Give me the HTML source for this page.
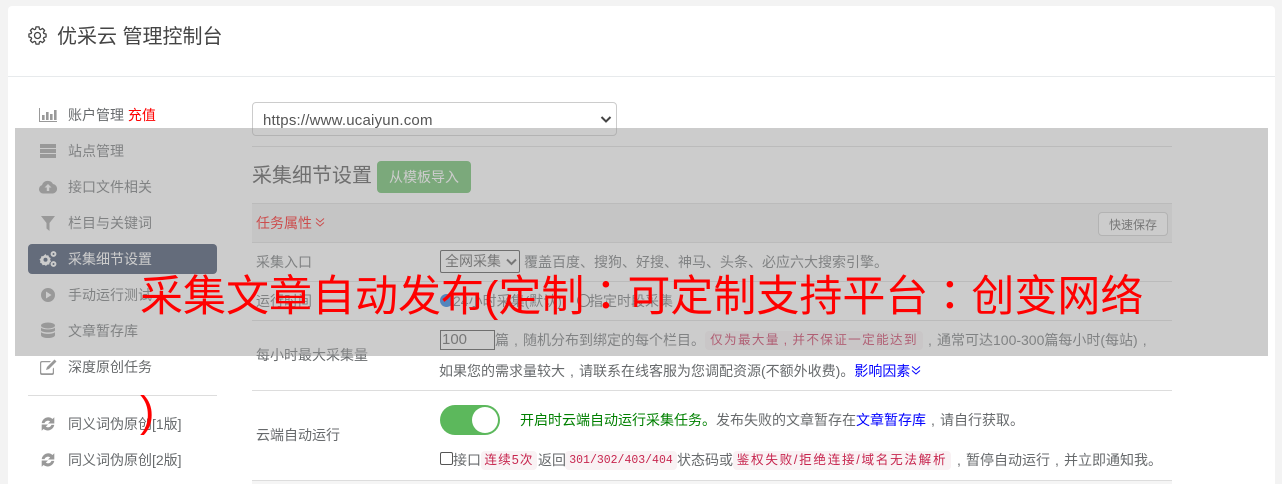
<!DOCTYPE html>
<html lang="zh-CN"><head><meta charset="utf-8"><title>优采云 管理控制台</title>
<style>
html,body{margin:0;padding:0;width:1282px;height:484px;overflow:hidden;background:#f3f3f3}
body{position:relative;font-family:"Liberation Sans","Noto Sans CJK SC",sans-serif;font-size:14px;color:#676a6c}
.a{position:absolute;white-space:nowrap}
.nav{position:absolute;left:68px;font-size:14px;line-height:20px;color:#676a6c;white-space:nowrap}
.ic{position:absolute;left:38px;width:20px;height:20px;fill:#999}
.line{position:absolute;left:252px;width:920px;height:1px;background:#ddd}
.c{display:inline-block;width:1em;text-align:center}
.code{position:absolute;height:19px;line-height:19px;background:#f9f2f4;color:#c7254e;border-radius:4px;font-size:12.6px;letter-spacing:1.1px;text-align:center;white-space:nowrap}
</style></head><body>
<div class="a" style="left:8px;top:6px;width:1267px;height:478px;background:#fff;border-radius:4px 4px 0 0"></div>
<div class="a" style="left:8px;top:76px;width:1267px;height:1px;background:#e7eaec"></div>
<svg class="a" style="left:28px;top:26px" width="19" height="19" viewBox="0 0 24 24" fill="none" stroke="#444" stroke-width="1.600" stroke-linejoin="round"><circle cx="12" cy="12" r="3.800"/><polygon points="10.09,1.17 13.91,1.17 14.46,3.97 15.94,4.58 18.31,2.99 21.01,5.69 19.42,8.06 20.03,9.54 22.83,10.09 22.83,13.91 20.03,14.46 19.42,15.94 21.01,18.31 18.31,21.01 15.94,19.42 14.46,20.03 13.91,22.83 10.09,22.83 9.54,20.03 8.06,19.42 5.69,21.01 2.99,18.31 4.58,15.94 3.97,14.46 1.17,13.91 1.17,10.09 3.97,9.54 4.58,8.06 2.99,5.69 5.69,2.99 8.06,4.58 9.54,3.97"/></svg>
<div class="a" style="left:57px;top:23px;font-size:20px;line-height:28px;color:#444">优采云 管理控制台</div>

<!-- sidebar -->
<svg class="ic" style="top:105px" viewBox="0 0 20 20"><path d="M1 3h1v13h17v1H1z"/><path d="M4 10h2.600v5H4zM8 7h2.600v8H8zM12 9h2.600v6H12zM16 5h2.600v10H16z"/></svg>
<div class="nav" style="top:105px">账户管理 <span style="color:#f00">充值</span></div>
<svg class="ic" style="top:141px" viewBox="0 0 20 20"><path d="M2 3h16v4H2zM2 8h16v4H2zM2 13h16v4H2z"/></svg>
<div class="nav" style="top:141px">站点管理</div>
<svg class="ic" style="top:177px" viewBox="0 0 20 20"><path d="M5 16.500a4.300 4.300 0 0 1-1-8.400A6 6 0 0 1 15 7a4.800 4.800 0 0 1 0 9.500z"/><path fill="#fff" d="M10 7l3.500 3.500h-2.300V14H8.800v-3.500H6.500z"/></svg>
<div class="nav" style="top:177px">接口文件相关</div>
<svg class="ic" style="top:213px" viewBox="0 0 20 20"><path d="M3 3h14l-5.500 7v8l-3-2.500V10z"/></svg>
<div class="nav" style="top:213px">栏目与关键词</div>
<div class="a" style="left:28px;top:244px;width:189px;height:30px;background:#2f3f5d;border-radius:4px"></div>
<svg class="ic" style="top:249px;fill:#fff" viewBox="0 0 20 20"><path d="M7.500 5l1 1.500 1.800-.3.800 2 1.600.8-.6 1.800.9 1.600-1.500 1.300-.3 1.800-1.900.1-1.300 1.300-1.600-1-1.800.4-.8-1.800-1.700-.7.300-1.900-.9-1.600 1.500-1.200.3-1.900 1.900-.1z"/><circle cx="7.500" cy="10.800" r="2" fill="#2f3f5d"/><circle cx="15.500" cy="5" r="2.900"/><circle cx="15.500" cy="15" r="2.900"/><circle cx="15.500" cy="5" r="1" fill="#2f3f5d"/><circle cx="15.500" cy="15" r="1" fill="#2f3f5d"/></svg>
<div class="nav" style="top:249px;color:#fff">采集细节设置</div>
<svg class="ic" style="top:285px" viewBox="0 0 20 20"><path fill-rule="evenodd" d="M10 3a7 7 0 1 1 0 14 7 7 0 0 1 0-14zM8 6.500v7l5.500-3.500z"/></svg>
<div class="nav" style="top:285px">手动运行测试</div>
<svg class="ic" style="top:321px" viewBox="0 0 20 20"><ellipse cx="10" cy="4.500" rx="7" ry="3"/><path d="M3 6.500c1.500 2.500 12.500 2.500 14 0v3c-1.500 2.500-12.500 2.500-14 0zM3 11c1.500 2.500 12.500 2.500 14 0v3c0 4-14 4-14 0z"/></svg>
<div class="nav" style="top:321px">文章暂存库</div>
<svg class="ic" style="top:357px" viewBox="0 0 20 20"><path d="M4 4h9l-1.200 1.200H4.200a1 1 0 0 0-1 1v9a1 1 0 0 0 1 1h9.600a1 1 0 0 0 1-1v-3.500L16 10.500V16a2 2 0 0 1-2 2H4a2 2 0 0 1-2-2V6a2 2 0 0 1 2-2z"/><path d="M16.500 2.500l2 2-7.500 7.500-3 1 1-3z"/></svg>
<div class="nav" style="top:357px">深度原创任务</div>
<div class="a" style="left:28px;top:395px;width:189px;height:1px;background:#ddd"></div>
<svg class="ic" style="top:415px;left:39px;width:18px;height:18px" viewBox="0 0 20 20"><path d="M10 2.500a7.500 7.500 0 0 1 5 1.900L17 2.500V9.500h-7l2.400-2.400a4 4 0 0 0-6.200 1.900H3A7.500 7.500 0 0 1 10 2.500zM3 10.500h7l-2.400 2.400a4 4 0 0 0 6.200-1.900H17a7.500 7.500 0 0 1-12 4.600L3 17.500z"/></svg>
<div class="nav" style="top:414px">同义词伪原创[1版]</div>
<svg class="ic" style="top:451px;left:39px;width:18px;height:18px" viewBox="0 0 20 20"><path d="M10 2.500a7.500 7.500 0 0 1 5 1.900L17 2.500V9.500h-7l2.400-2.400a4 4 0 0 0-6.200 1.900H3A7.500 7.500 0 0 1 10 2.500zM3 10.500h7l-2.400 2.400a4 4 0 0 0 6.200-1.900H17a7.500 7.500 0 0 1-12 4.600L3 17.500z"/></svg>
<div class="nav" style="top:450px">同义词伪原创[2版]</div>

<!-- main -->
<div class="a" style="left:252px;top:102px;width:363px;height:32px;border:1px solid #ccc;border-radius:4px;background:#fff"></div>
<div class="a" style="left:263px;top:110px;font-size:15px;line-height:21px;color:#555;letter-spacing:.2px">https://www.ucaiyun.com</div>
<svg class="a" style="left:600px;top:115px" width="12" height="9" viewBox="0 0 12 9" fill="none" stroke="#444" stroke-width="2"><path d="M1.500 2l4.500 4.500L10.500 2"/></svg>
<div class="line" style="top:146px"></div>
<div class="a" style="left:252px;top:162px;font-size:20px;line-height:28px;color:#444">采集细节设置</div>
<div class="a" style="left:377px;top:161px;width:94px;height:32px;background:#5cb85c;border-radius:4px"></div>
<div class="a" style="left:389px;top:167px;font-size:14px;line-height:20px;color:#fff">从模板导入</div>
<div class="a" style="left:252px;top:203px;width:920px;height:40px;background:#f0f0f0;box-shadow:inset 0 1px 0 #ddd,inset 0 -1px 0 #ddd"></div>
<div class="a" style="left:256px;top:213px;font-size:14px;line-height:20px;color:#f00">任务属性</div>
<svg class="a" style="left:315px;top:217px" width="10" height="11" viewBox="0 0 10 11" fill="none" stroke="#f00" stroke-width="1"><path d="M1 1.500l4 3.500 4-3.500M1 5.500l4 3.500 4-3.500"/></svg>
<div class="a" style="left:1098px;top:212px;width:68px;height:22px;border:1px solid #ccc;border-radius:4px;background:#fff;font-size:12px;line-height:25px;text-align:center;color:#555">快速保存</div>

<div class="a" style="left:256px;top:252px;line-height:20px">采集入口</div>
<div class="a" style="left:440px;top:250px;width:78px;height:21px;border:1px solid #444;border-radius:2px;background:#fff"></div>
<div class="a" style="left:445px;top:252px;line-height:19px;color:#555">全网采集</div>
<svg class="a" style="left:506px;top:258px" width="11" height="8" viewBox="0 0 11 8" fill="none" stroke="#555" stroke-width="2"><path d="M1 1.500l4.500 4.500L10 1.500"/></svg>
<div class="a" style="left:524px;top:252px;line-height:20px">覆盖百度、搜狗、好搜、神马、头条、必应六大搜索引擎。</div>
<div class="line" style="top:281px"></div>
<div class="a" style="left:256px;top:291px;line-height:20px">运行时间</div>
<div class="a" style="left:440px;top:294px;width:13px;height:13px;border-radius:50%;background:#0a70e0"></div>
<div class="a" style="left:453px;top:291px;line-height:20px">24小时采集(默认)</div>
<div class="a" style="left:577px;top:294px;width:11px;height:11px;border:1px solid #555;border-radius:50%;background:#fff"></div>
<div class="a" style="left:589px;top:291px;line-height:20px">指定时段采集</div>
<div class="line" style="top:320px"></div>
<div class="a" style="left:256px;top:345px;line-height:20px">每小时最大采集量</div>
<div class="a" style="left:440px;top:330px;width:53px;height:18px;border:1px solid #444;background:#fff;font-size:15px;line-height:18px;color:#555;text-indent:1px">100</div>
<div class="a" style="left:495px;top:330px;line-height:20px">篇<span class="c">,</span>随机分布到绑定的每个栏目。</div>
<div class="code" style="left:705px;top:331px;width:218px;letter-spacing:1.35px">仅为最大量<span class="c" style="width:12.6px">,</span>并不保证一定能达到</div>
<div class="a" style="left:923px;top:330px;line-height:20px"><span class="c">,</span>通常可达100-300篇每小时(每站)<span class="c">,</span></div>
<div class="a" style="left:439px;top:361px;line-height:20px">如果您的需求量较大<span class="c">,</span>请联系在线客服为您调配资源(不额外收费)。<span style="color:#00f">影响因素</span></div>
<svg class="a" style="left:911px;top:365px" width="10" height="11" viewBox="0 0 10 11" fill="none" stroke="#00f" stroke-width="1"><path d="M1 1.500l4 3.500 4-3.500M1 5.500l4 3.500 4-3.500"/></svg>
<div class="line" style="top:390px"></div>
<div class="a" style="left:256px;top:425px;line-height:20px">云端自动运行</div>
<div class="a" style="left:440px;top:405px;width:60px;height:30px;border-radius:15px;background:#5cb85c"></div>
<div class="a" style="left:472px;top:407px;width:26px;height:26px;border-radius:50%;background:#fff"></div>
<div class="a" style="left:520px;top:410px;line-height:20px"><span style="color:#008000">开启时云端自动运行采集任务。</span>发布失败的文章暂存在<span style="color:#00f">文章暂存库</span><span class="c">,</span>请自行获取。</div>
<div class="a" style="left:440px;top:452px;width:11px;height:11px;border:1px solid #555;border-radius:2px;background:#fff"></div>
<div class="a" style="left:453px;top:450px;line-height:20px">接口</div>
<div class="code" style="left:481px;top:451px;width:56px">连续5次</div>
<div class="a" style="left:538px;top:450px;line-height:20px">返回</div>
<div class="code" style="left:565px;top:451px;width:112px;font-family:'Liberation Mono',monospace;font-size:11.5px;letter-spacing:0">301/302/403/404</div>
<div class="a" style="left:677px;top:450px;line-height:20px">状态码或</div>
<div class="code" style="left:733px;top:451px;width:218px;letter-spacing:1.7px">鉴权失败/拒绝连接/域名无法解析</div>
<div class="a" style="left:952px;top:450px;line-height:20px"><span class="c">,</span>暂停自动运行<span class="c">,</span>并立即通知我。</div>
<div class="line" style="top:480px"></div>
<div class="a" style="left:252px;top:481px;width:920px;height:3px;background:#f5f5f5"></div>

<!-- overlay -->
<div class="a" style="left:15px;top:128px;width:1253px;height:228px;background:rgba(153,153,153,.5)"></div>
<div class="a" style="left:140px;top:263px;width:1010px;font-size:43px;line-height:60px;color:#f00;white-space:nowrap">采集文章自动发布(定制<span lang="zh-TW" style="font-family:'Noto Sans CJK TC',sans-serif">：</span>可定制支持平台<span lang="zh-TW" style="font-family:'Noto Sans CJK TC',sans-serif">：</span>创变网络</div>
<div class="a" style="left:140px;top:382px;font-size:43px;line-height:60px;color:#f00">)</div>
</body></html>
